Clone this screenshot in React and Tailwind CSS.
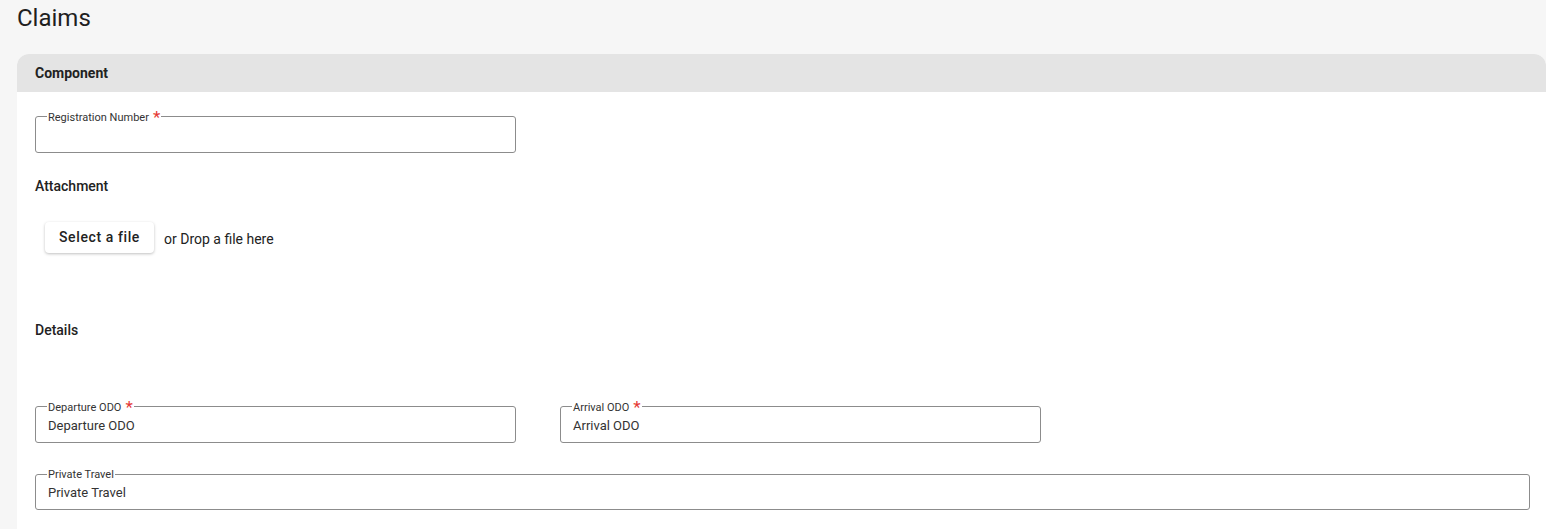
export default function App() {
  return (
    <div className="min-h-screen bg-[#f6f6f6] pl-[17px] text-[#222] font-['Roboto',sans-serif]">
      <h1 className="text-[24px] leading-[36px] font-normal text-[#1f1f1f]">Claims</h1>
      <div className="mt-[18px] bg-white rounded-t-[12px] overflow-hidden">
        <div className="bg-[#e4e4e4] h-[38px] flex items-center px-[18px] text-[14px] font-bold text-[#222]">
          Component
        </div>
        <div className="pl-[18px] pr-[16px] pt-[17px] pb-[20px]">
          <Field label="Registration Number" required className="w-[481px]" />

          <div className="mt-[23px] text-[14px] leading-[20px] font-medium text-[#222]">Attachment</div>
          <div className="mt-[26px] ml-[10px] flex items-center gap-[10px]">
            <button className="h-[31px] w-[109px] rounded-[4px] bg-white text-[14px] font-medium tracking-[0.6px] text-[#222] shadow-[0_1px_3px_rgba(0,0,0,0.25)]">
              Select a file
            </button>
            <span className="text-[14px] text-[#222] pt-[3px]">or Drop a file here</span>
          </div>

          <div className="mt-[67px] text-[14px] leading-[20px] font-medium text-[#222]">Details</div>

          <div className="mt-[59px] flex gap-[44px]">
            <Field label="Departure ODO" required value="Departure ODO" className="w-[481px]" />
            <Field label="Arrival ODO" required value="Arrival ODO" className="w-[481px]" />
          </div>

          <Field label="Private Travel" value="Private Travel" className="mt-[25px] w-full" />
        </div>
      </div>
    </div>
  );
}

function Field({ label, required, value, className = "" }) {
  return (
    <fieldset className={`border border-[#8c8c8c] rounded-[3px] px-[12px] pt-[3px] pb-[8px] ${className}`}>
      <legend className="px-px -ml-px text-[11px] leading-[13px] text-[#333]">
        {label}
        {required && (
          <span className="relative top-[3px] ml-[4px] text-[17px] leading-[10px] text-[#e53935] align-[1px]">*</span>
        )}
      </legend>
      <div className="h-[17px] text-[13px] leading-[17px] text-[#333]">{value}</div>
    </fieldset>
  );
}
